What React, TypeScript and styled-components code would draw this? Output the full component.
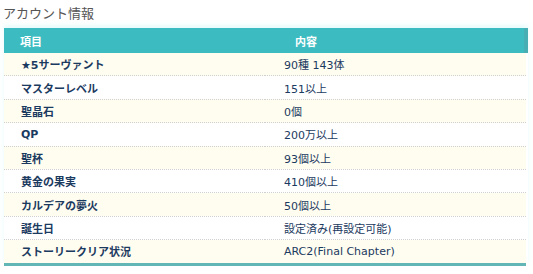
import React from "react";
import styled, { createGlobalStyle } from "styled-components";

const GlobalStyle = createGlobalStyle`
  html, body {
    margin: 0;
    padding: 0;
    background: #ffffff;
  }
  body {
    font-family: "DejaVu Sans", "Noto Sans CJK JP", sans-serif;
  }
`;

const rows: [string, string][] = [
  ["★5サーヴァント", "90種 143体"],
  ["マスターレベル", "151以上"],
  ["聖晶石", "0個"],
  ["QP", "200万以上"],
  ["聖杯", "93個以上"],
  ["黄金の果実", "410個以上"],
  ["カルデアの夢火", "50個以上"],
  ["誕生日", "設定済み(再設定可能)"],
  ["ストーリークリア状況", "ARC2(Final Chapter)"],
];

const App: React.FC = () => {
  return (
    <Page>
      <GlobalStyle />
      <Title>アカウント情報</Title>
      <InfoTable>
        <colgroup>
          <col style={{ width: "50%" }} />
          <col style={{ width: "50%" }} />
        </colgroup>
        <thead>
          <tr>
            <HeadCell>項目</HeadCell>
            <HeadCell $wide>内容</HeadCell>
          </tr>
        </thead>
        <tbody>
          {rows.map(([label, value], i) => (
            <Row key={label} $odd={i % 2 === 0}>
              <LabelCell>{label}</LabelCell>
              <ValueCell>{value}</ValueCell>
            </Row>
          ))}
        </tbody>
      </InfoTable>
    </Page>
  );
};

const Page = styled.div`
  width: 533px;
  padding-top: 5px;
`;

const Title = styled.h3`
  margin: 0 0 8px 3px;
  font-family: "Noto Sans CJK JP", sans-serif;
  font-weight: normal;
  font-size: 13px;
  line-height: 15px;
  color: #555555;
`;

const InfoTable = styled.table`
  margin: 0 0 0 4px;
  width: 524px;
  border-collapse: collapse;
  table-layout: fixed;
  border-bottom: 3px solid #62b6b5;
  box-shadow: 0 -3px 4px rgba(160, 240, 240, 0.25);
`;

const HeadCell = styled.th<{ $wide?: boolean }>`
  height: 25px;
  padding: 0 0 0 ${({ $wide }) => ($wide ? "30px" : "16px")};
  background: #3cbcc0;
  color: #ffffff;
  font-size: 11px;
  font-weight: bold;
  text-align: left;
  &:last-child {
    border-right: 4px solid #47aeb3;
  }
`;

const Row = styled.tr<{ $odd: boolean }>`
  background: ${({ $odd }) => ($odd ? "#fffdf0" : "#ffffff")};
  border-bottom: 1px dotted #d0d0d0;
  &:last-child {
    border-bottom: none;
  }
`;

const LabelCell = styled.td`
  height: 22.4px;
  padding: 0 0 0 17px;
  color: #1b3a60;
  font-size: 11px;
  font-weight: bold;
`;

const ValueCell = styled.td`
  height: 22.4px;
  padding: 0 0 0 19px;
  color: #1b3a60;
  font-size: 11px;
`;

export default App;
